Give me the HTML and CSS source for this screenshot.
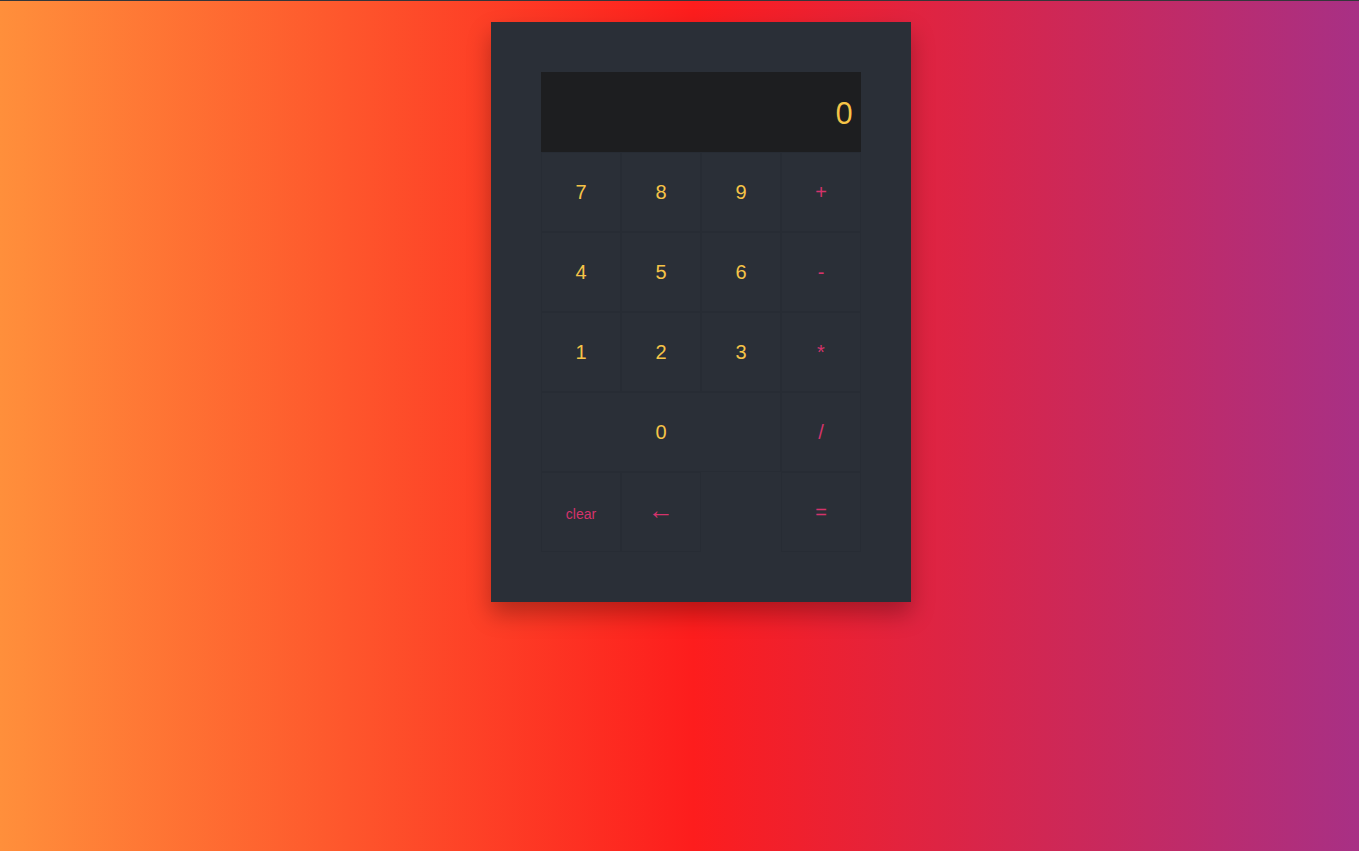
FILE: index.html
```html
<!DOCTYPE html>
<html>
<head>
<meta charset="utf-8">
<link rel="stylesheet" href="styles.css">
</head>
<body>
<div class="calc">
  <div class="display">0</div>
  <div class="keys">
    <button class="key num">7</button>
    <button class="key num">8</button>
    <button class="key num">9</button>
    <button class="key op">+</button>
    <button class="key num">4</button>
    <button class="key num">5</button>
    <button class="key num">6</button>
    <button class="key op">-</button>
    <button class="key num">1</button>
    <button class="key num">2</button>
    <button class="key num">3</button>
    <button class="key op">*</button>
    <button class="key num zero">0</button>
    <button class="key op">/</button>
    <button class="key op small">clear</button>
    <button class="key op arrow">&larr;</button>
    <span class="gap"></span>
    <button class="key op">=</button>
  </div>
</div>
</body>
</html>
```
FILE: styles.css
```css
html, body {
  margin: 0;
  height: 100%;
}
body {
  border-top: 1px solid #35363a;
  box-sizing: border-box;
  background: linear-gradient(to right, #ff8f3b 0%, #fd1d1d 51%, #a83085 100%);
  font-family: "Liberation Sans", Arial, sans-serif;
  overflow: hidden;
}
.calc {
  width: 320px;
  padding: 50px;
  margin: 21px 0 0 491px;
  background: #2a2f37;
  box-shadow: 0 12px 22px rgba(0, 0, 0, 0.28);
}
.display {
  height: 80px;
  background: #1d1e20;
  color: #f6c447;
  font-family: "Open Sans", "DejaVu Sans", sans-serif;
  font-size: 31px;
  display: flex;
  align-items: center;
  justify-content: flex-end;
  padding-right: 8px;
  box-sizing: border-box;
}
.keys {
  display: grid;
  grid-template-columns: repeat(4, 80px);
  grid-auto-rows: 80px;
}
.key {
  margin: 0;
  padding: 0;
  background: transparent;
  border: 1px solid rgba(0, 0, 0, 0.05);
  font-family: "Liberation Sans", Arial, sans-serif;
  font-size: 20px;
  cursor: pointer;
}
.num { color: #f6c447; }
.op { color: #d5336b; }
.zero { grid-column: span 3; }
.small { font-size: 14px; padding-top: 4px; }
.arrow { font-size: 26px; padding-bottom: 4px; }
```
